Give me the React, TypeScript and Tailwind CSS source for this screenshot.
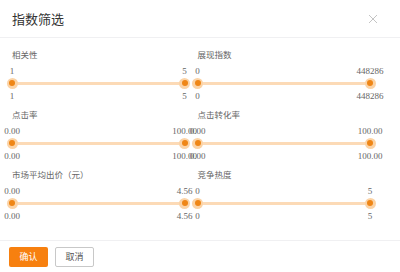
import React from 'react';

// ─── Types ────────────────────────────────────────────────────────────────────

interface RangeFilter {
  label: string;
  min: string;
  max: string;
}

// ─── Data ─────────────────────────────────────────────────────────────────────

const FILTERS: RangeFilter[] = [
  { label: '相关性', min: '1', max: '5' },
  { label: '展现指数', min: '0', max: '448286' },
  { label: '点击率', min: '0.00', max: '100.00' },
  { label: '点击转化率', min: '0.00', max: '100.00' },
  { label: '市场平均出价（元）', min: '0.00', max: '4.56' },
  { label: '竞争热度', min: '0', max: '5' },
];

const CJK = { fontFamily: '"Noto Sans CJK SC", "Noto Sans", sans-serif' };
const NUM = { fontFamily: '"Liberation Serif", "Noto Sans CJK SC", serif' };

// ─── Pieces ───────────────────────────────────────────────────────────────────

const Values: React.FC<{ min: string; max: string }> = ({ min, max }) => (
  <div className="flex justify-between h-[12px] text-[9px] leading-[12px] text-[#666]" style={NUM}>
    <div className="w-0 flex justify-center whitespace-nowrap">{min}</div>
    <div className="w-0 flex justify-center whitespace-nowrap">{max}</div>
  </div>
);

const Handle = () => (
  <div className="relative z-10 w-0 flex justify-center">
    <div className="w-[11px] h-[11px] shrink-0 rounded-full bg-[#fbd3a6] flex items-center justify-center">
      <div className="w-[6px] h-[6px] rounded-full bg-[#ef8616]" />
    </div>
  </div>
);

const Slider: React.FC<RangeFilter> = ({ label, min, max }) => (
  <div>
    <div className="h-[14px] text-[8.5px] leading-[14px] text-[#666]" style={CJK}>
      {label}
    </div>
    <div className="mt-[4px]">
      <Values min={min} max={max} />
    </div>
    <div className="h-[12px] flex items-center">
      <Handle />
      <div className="flex-1 h-[3px] bg-[#fcdab6]" />
      <Handle />
    </div>
    <div className="mt-[1px]">
      <Values min={min} max={max} />
    </div>
  </div>
);

// ─── Component ────────────────────────────────────────────────────────────────

export default function App() {
  return (
    <div className="w-[400px] h-[272px] bg-white flex flex-col" style={CJK}>
      {/* Header */}
      <div className="h-[38px] px-3 flex items-center justify-between border-b border-[#f0f0f2]">
        <h3 className="text-[13px] text-[#333]">指数筛选</h3>
        <button className="mr-[10px] text-[#c4c4c4]">
          <svg width="10" height="10" viewBox="0 0 10 10" fill="none" stroke="currentColor" strokeWidth="1">
            <path d="M1 1L9 9M9 1L1 9" />
          </svg>
        </button>
      </div>

      {/* Sliders */}
      <div className="pt-[9px] pl-3 pr-[30px] grid grid-cols-2 gap-x-[13px] gap-y-[5px]">
        {FILTERS.map(f => (
          <Slider key={f.label} {...f} />
        ))}
      </div>

      <div className="flex-1" />

      {/* Footer */}
      <div className="h-[32px] border-t border-[#f0f0f2] px-[9px] pt-[6px] flex gap-[7px]">
        <button className="w-[39px] h-[20px] rounded-[2px] bg-[#f7800f] text-white text-[9px]">
          确认
        </button>
        <button className="w-[39px] h-[20px] rounded-[2px] border border-[#c8c8c8] bg-white text-[#555] text-[9px]">
          取消
        </button>
      </div>
    </div>
  );
}
